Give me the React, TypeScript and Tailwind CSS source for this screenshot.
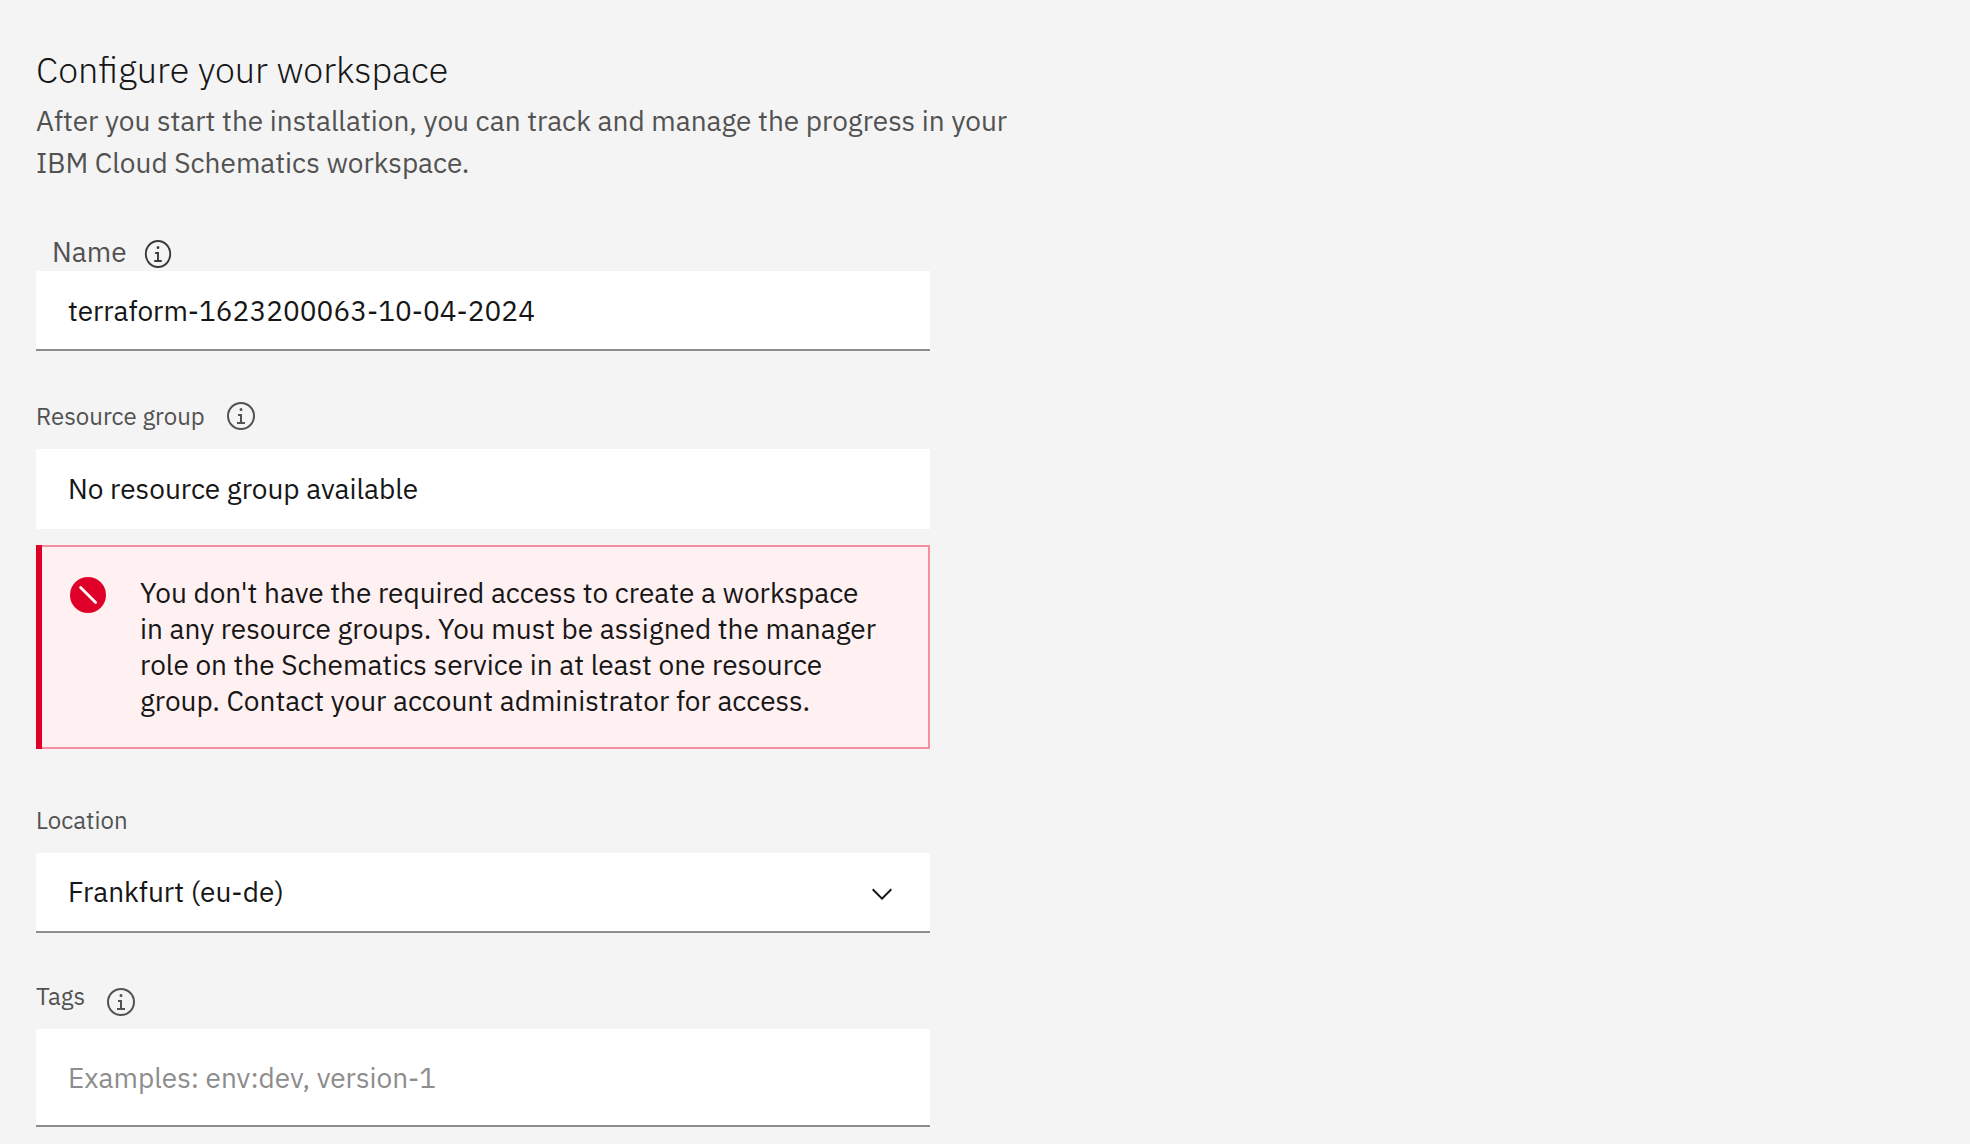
import type { ReactNode } from "react";

function InfoIcon({ narrow = false }: { narrow?: boolean }) {
  return (
    <svg
      viewBox="0 0 32 32"
      preserveAspectRatio="none"
      fill="currentColor"
      aria-hidden="true"
      className={narrow ? "h-8 w-[30px]" : "size-8"}
    >
      <path d="M17 22v-8h-4v2h2v6h-3v2h8v-2zM16 8a1.5 1.5 0 1 0 1.5 1.5A1.5 1.5 0 0 0 16 8z" />
      <path d="M16 30a14 14 0 1 1 14-14 14 14 0 0 1-14 14zm0-26a12 12 0 1 0 12 12A12 12 0 0 0 16 4z" />
    </svg>
  );
}

function ErrorIcon() {
  return (
    <svg viewBox="0 0 20 20" aria-hidden="true" className="size-10 shrink-0">
      <circle cx="10" cy="10" r="9" fill="#df0029" />
      <path d="M6.3 6.2L13.8 13.7" stroke="#fff" strokeWidth="1.4" strokeLinecap="round" />
    </svg>
  );
}

function ChevronDown() {
  return (
    <svg
      viewBox="0 0 16 16"
      fill="currentColor"
      aria-hidden="true"
      className="pointer-events-none absolute top-[25px] right-8 size-8"
    >
      <path d="M8 11L3 6 3.7 5.3 8 9.6 12.3 5.3 13 6z" />
    </svg>
  );
}

function FieldLabel({ htmlFor, children }: { htmlFor: string; children: ReactNode }) {
  return (
    <label htmlFor={htmlFor} className="text-[24px] leading-8">
      {children}
    </label>
  );
}

const field =
  "block w-full appearance-none rounded-none border-b-2 bg-white px-8 text-[28px] text-[#161616] outline-none placeholder:text-[#8d8d8d]";

export default function App() {
  return (
    <main className="min-h-screen bg-[#f4f4f4] px-9 pt-11 font-['IBM_Plex_Sans','Roboto',sans-serif] text-[#525252]">
      <h1 className="text-[36px] leading-[52px] font-light text-[#161616]">Configure your workspace</h1>
      <p className="mt-1 max-w-[1000px] text-[28px] leading-[42px]">
        After you start the installation, you can track and manage the progress in your IBM Cloud
        Schematics workspace.
      </p>

      <form className="mt-12 max-w-[894px]">
        <div>
          <div className="flex items-center gap-4 pl-4">
            <label htmlFor="name" className="text-[28px] leading-9">
              Name
            </label>
            <button type="button" aria-label="About the name" className="mt-1.5 mb-px text-[#393939]">
              <InfoIcon narrow />
            </button>
          </div>
          <input
            id="name"
            type="text"
            defaultValue="terraform-1623200063-10-04-2024"
            className={`${field} h-20 border-[#8d8d8d]`}
          />
        </div>

        <div className="mt-[49px]">
          <div className="mb-[17px] flex items-start gap-5">
            <FieldLabel htmlFor="resource-group">Resource group</FieldLabel>
            <button type="button" aria-label="About resource groups">
              <InfoIcon />
            </button>
          </div>
          <input
            id="resource-group"
            type="text"
            readOnly
            value="No resource group available"
            className={`${field} h-20 border-white`}
          />
          <div role="alert" className="mt-4 flex bg-[#fff0f1]">
            <div className="w-1.5 shrink-0 bg-[#df0029]" />
            <div className="flex flex-1 items-start gap-8 border-2 border-l-0 border-[#f48fa0] py-7 pr-12 pl-[26px]">
              <ErrorIcon />
              <p className="text-[28px] leading-9 text-[#161616]">
                You don't have the required access to create a workspace in any resource groups. You
                must be assigned the manager role on the Schematics service in at least one resource
                group. Contact your account administrator for access.
              </p>
            </div>
          </div>
        </div>

        <div className="mt-[55px]">
          <div className="mb-[17px] flex">
            <FieldLabel htmlFor="location">Location</FieldLabel>
          </div>
          <div className="relative text-[#161616]">
            <select id="location" className={`${field} h-20 border-[#8d8d8d]`}>
              <option>Frankfurt (eu-de)</option>
            </select>
            <ChevronDown />
          </div>
        </div>

        <div className="mt-[47px]">
          <div className="mb-[11px] flex items-start gap-5">
            <FieldLabel htmlFor="tags">Tags</FieldLabel>
            <button type="button" aria-label="About tags" className="mt-1.5">
              <InfoIcon />
            </button>
          </div>
          <input
            id="tags"
            type="text"
            placeholder="Examples: env:dev, version-1"
            className={`${field} h-[98px] border-[#8d8d8d]`}
          />
        </div>
      </form>
    </main>
  );
}
